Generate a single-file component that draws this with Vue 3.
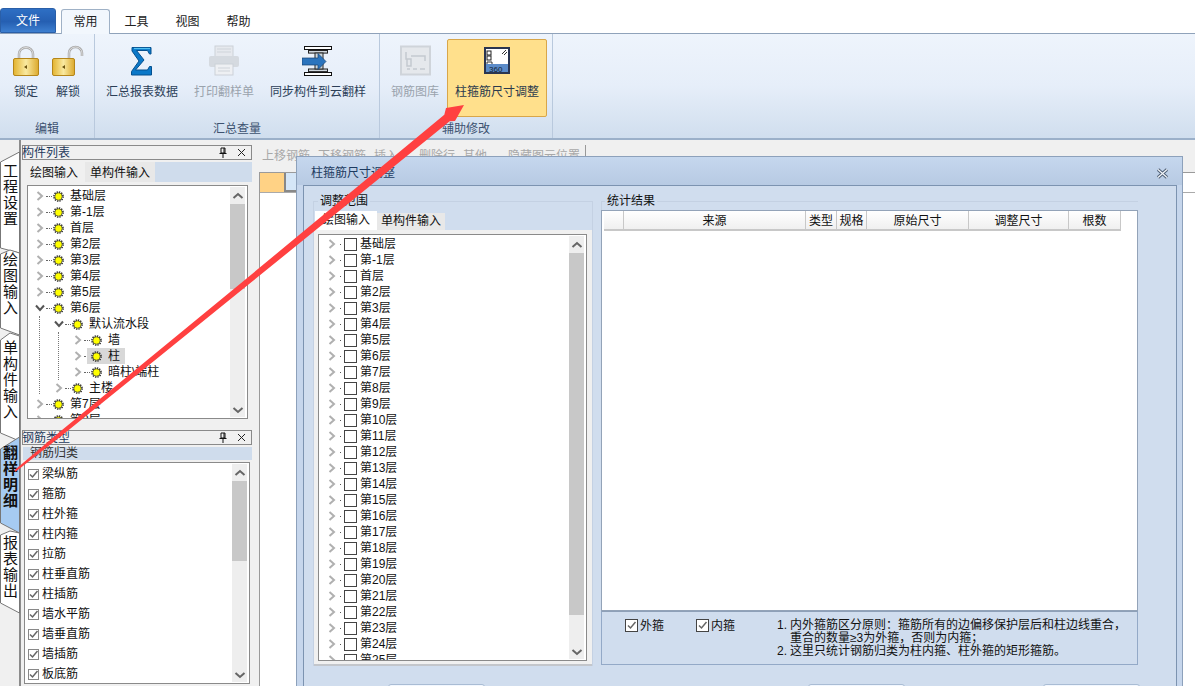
<template>
  <div class="app">
    <svg class="defs" width="0" height="0">
      <symbol id="gear" viewBox="0 0 12 12">
        <circle cx="6" cy="6" r="5" fill="none" stroke="#222" stroke-width="1.600" stroke-dasharray="1.500 1.100"/>
        <circle cx="6" cy="6" r="4" fill="#ffff00" stroke="#333" stroke-width="0.700"/>
      </symbol>
      <symbol id="chev" viewBox="0 0 8 10">
        <polyline points="1.500,1 6,5 1.500,9" fill="none" stroke="#b0b0b0" stroke-width="2"/>
      </symbol>
      <symbol id="chev-open" viewBox="0 0 10 8">
        <polyline points="1,1.500 5,6 9,1.500" fill="none" stroke="#555" stroke-width="2"/>
      </symbol>
      <symbol id="up" viewBox="0 0 12 8">
        <polyline points="1.500,6 6,2 10.500,6" fill="none" stroke="#666" stroke-width="2"/>
      </symbol>
      <symbol id="down" viewBox="0 0 12 8">
        <polyline points="1.500,2 6,6 10.500,2" fill="none" stroke="#666" stroke-width="2"/>
      </symbol>
      <symbol id="tick" viewBox="0 0 11 11">
        <polyline points="2,5.500 4.500,8 9.500,2" fill="none" stroke="#666" stroke-width="1.500"/>
      </symbol>
    </svg>

    <!-- ribbon -->
    <div class="tabs">
      <div class="file-tab">文件</div>
      <div class="rtab active">常用</div>
      <div class="rtab">工具</div>
      <div class="rtab">视图</div>
      <div class="rtab">帮助</div>
    </div>
    <div class="ribbon">
      <div class="group g1">
        <div class="btns">
          <div class="rbtn">
            <svg class="ico" width="32" height="32" viewBox="0 0 32 32">
              <defs>
                <linearGradient id="gold" x1="0" x2="1" y1="0" y2="0">
                  <stop offset="0" stop-color="#e3b32f"/><stop offset="0.5" stop-color="#f9e9a0"/><stop offset="1" stop-color="#dca92c"/>
                </linearGradient>
              </defs>
              <path d="M9 14V9a7 6.500 0 0 1 14 0v5" fill="none" stroke="#a8a8a8" stroke-width="2.500"/>
              <path d="M9 14V9a7 6.500 0 0 1 14 0v5" fill="none" stroke="#e8e8e8" stroke-width="0.800"/>
              <rect x="3.500" y="13.500" width="25" height="17" rx="1.500" fill="url(#gold)" stroke="#b5861a"/>
              <path d="M17 20l-3 2 3 2z" fill="#6b5310"/>
            </svg>
            <span>锁定</span>
          </div>
          <div class="rbtn">
            <svg class="ico" width="32" height="32" viewBox="0 0 32 32">
              <path d="M17 14V8a6.500 6 0 0 1 13 0v3" fill="none" stroke="#a8a8a8" stroke-width="2.500"/>
              <path d="M17 14V8a6.500 6 0 0 1 13 0v3" fill="none" stroke="#e8e8e8" stroke-width="0.800"/>
              <rect x="0.500" y="13.500" width="22" height="17" rx="1.500" fill="url(#gold)" stroke="#b5861a"/>
              <path d="M13 20l-3 2 3 2z" fill="#6b5310"/>
            </svg>
            <span>解锁</span>
          </div>
        </div>
        <div class="glabel">编辑</div>
      </div>
      <div class="group g2">
        <div class="btns">
          <div class="rbtn">
            <svg class="ico" width="32" height="32" viewBox="0 0 32 32">
              <path d="M6 2.500H25V9H23.500L21.500 5.500H10.500L18 15L9.500 25H21.500L23.500 21.500H25.500V30H5.500V26.500L13 16L6 6Z" fill="#0b78c8" stroke="#05508f"/>
              <path d="M8 3.500H24" stroke="#53c1f2" stroke-width="1.200"/>
            </svg>
            <span>汇总报表数据</span>
          </div>
          <div class="rbtn off">
            <svg class="ico" width="32" height="32" viewBox="0 0 32 32">
              <rect x="7" y="1" width="18" height="11" fill="#e6e9ee" stroke="#ccd1d8"/>
              <path d="M9 4h14M9 7h14" stroke="#cfd4da"/>
              <rect x="1" y="11" width="30" height="11" rx="2" fill="#d5dae0"/>
              <rect x="7" y="19" width="18" height="11" fill="#eef0f3" stroke="#ccd1d8"/>
              <path d="M10 23h12M10 26h12" stroke="#cfd4da"/>
            </svg>
            <span>打印翻样单</span>
          </div>
          <div class="rbtn">
            <svg class="ico" width="32" height="32" viewBox="0 0 32 32">
              <rect x="2.500" y="1.500" width="27" height="3" fill="#fff" stroke="#111"/>
              <rect x="6.500" y="5.500" width="19" height="2.600" fill="#cfd6dc" stroke="#222"/>
              <rect x="2.500" y="27.500" width="27" height="3" fill="#fff" stroke="#111"/>
              <rect x="6.500" y="24" width="19" height="2.600" fill="#cfd6dc" stroke="#222"/>
              <rect x="13" y="8" width="8" height="16" fill="#cdd6db" stroke="#222"/>
              <path d="M0 13h16V8.500l8 8-8 8V20H0z" fill="#2b74bd" stroke="#14406e" stroke-width="0.700"/>
            </svg>
            <span>同步构件到云翻样</span>
          </div>
        </div>
        <div class="glabel">汇总查量</div>
      </div>
      <div class="group g3">
        <div class="btns">
          <div class="rbtn off">
            <svg class="ico" width="32" height="32" viewBox="0 0 32 32">
              <rect x="2" y="1.500" width="29" height="28" fill="#e5e8ec" stroke="#cfd4da" stroke-width="2"/>
              <path d="M7 7v7h5v7h-4v-7M12 11h14v5M8 24h3M14 24h4M21 24h5" fill="none" stroke="#c4c9cf" stroke-width="1.500"/>
            </svg>
            <span>钢筋图库</span>
          </div>
          <div class="rbtn hot">
            <svg class="ico" width="32" height="32" viewBox="0 0 32 32">
              <rect x="4" y="3" width="24" height="25" fill="#fff" stroke="#2a3550" stroke-width="2"/>
              <rect x="5" y="19" width="22" height="8" fill="#5b8bc8"/>
              <rect x="6" y="6" width="4" height="4" fill="none" stroke="#222"/>
              <rect x="6" y="11" width="4" height="4" fill="none" stroke="#222"/>
              <path d="M6 19v-2h5v2M21 9l4-4M23 10l3-3" fill="none" stroke="#333"/>
              <text x="8" y="26.500" class="ico-num">360</text>
            </svg>
            <span>柱箍筋尺寸调整</span>
          </div>
        </div>
        <div class="glabel">辅助修改</div>
      </div>
    </div>

    <!-- workspace -->
    <div class="work">
      <div class="side">
        <div
          v-for="t in sideTabs"
          :key="t.text"
          class="stab"
          :class="{ on: t.on }"
          :style="{ height: t.h + 'px', paddingTop: t.pad + 'px' }"
        >
          <svg class="stab-bg" width="20" :height="t.h" :viewBox="`0 0 20 ${t.h}`">
            <polygon :points="t.shape" :fill="t.on ? '#a6cbf2' : '#fff'" stroke="#777"/>
          </svg>
          <span>{{ t.text }}</span>
        </div>
      </div>

      <div class="left">
        <div class="ptitle">
          <span>构件列表</span>
          <svg width="10" height="11" viewBox="0 0 10 11"><path d="M3 1h4v5H3zM1.500 6.500h7M5 7v4M6 1v5" fill="none" stroke="#111"/></svg>
          <svg width="9" height="9" viewBox="0 0 9 9"><path d="M1 1l7 7M8 1L1 8" stroke="#222"/></svg>
        </div>
        <div class="ptabs">
          <div class="ptab on">绘图输入</div>
          <div class="ptab">单构件输入</div>
        </div>
        <div class="treebox t1">
          <div class="rows">
            <i class="vline a"></i><i class="vline b"></i>
            <div v-for="r in floors" :key="r.name" class="row" :style="{ paddingLeft: 8 + r.lv * 19 + 'px' }">
              <svg v-if="r.open" class="exp" width="10" height="8"><use href="#chev-open"/></svg>
              <svg v-else class="exp" width="8" height="10"><use href="#chev"/></svg>
              <i class="dots"></i>
              <div class="node" :class="{ sel: r.sel }">
                <svg width="11" height="11"><use href="#gear"/></svg>
                <span>{{ r.name }}</span>
              </div>
            </div>
          </div>
          <div class="sb">
            <svg width="12" height="8"><use href="#up"/></svg>
            <i class="thumb th1"></i>
            <svg class="dn" width="12" height="8"><use href="#down"/></svg>
          </div>
        </div>

        <div class="ptitle second">
          <span>钢筋类型</span>
          <svg width="10" height="11" viewBox="0 0 10 11"><path d="M3 1h4v5H3zM1.500 6.500h7M5 7v4M6 1v5" fill="none" stroke="#111"/></svg>
          <svg width="9" height="9" viewBox="0 0 9 9"><path d="M1 1l7 7M8 1L1 8" stroke="#222"/></svg>
        </div>
        <div class="kind-bar">钢筋归类</div>
        <div class="treebox t2">
          <div class="rows">
            <div v-for="k in kinds" :key="k" class="kind">
              <span class="cb small"><svg width="11" height="11"><use href="#tick"/></svg></span>
              <span>{{ k }}</span>
            </div>
          </div>
          <div class="sb">
            <svg width="12" height="8"><use href="#up"/></svg>
            <i class="thumb th2"></i>
            <svg class="dn" width="12" height="8"><use href="#down"/></svg>
          </div>
        </div>
      </div>

      <div class="main">
        <div class="tools">
          <span>上移钢筋</span><span>下移钢筋</span><span>插入</span><span class="far">删除行</span><span>其他</span><span class="far">隐藏图元位置</span>
        </div>
        <div class="sheet">
          <div class="sheet-head"><i class="corner"></i><i class="headcell"></i></div>
        </div>
      </div>
    </div>

    <!-- dialog window -->
    <div class="dlg">
      <div class="dlg-title">
        <span>柱箍筋尺寸调整</span>
        <svg width="13" height="11" viewBox="0 0 13 11">
          <path d="M2 1.500l9 8M11 1.500l-9 8" stroke="#4f5f75" stroke-width="3.200"/>
          <path d="M2 1.500l9 8M11 1.500l-9 8" stroke="#f4f7fb" stroke-width="1.200"/>
        </svg>
      </div>
      <div class="dlg-body">
        <div class="dlg-cols">
          <fieldset class="range">
            <legend>调整范围</legend>
            <div class="dtabs">
              <div class="dtab on">绘图输入</div>
              <div class="dtab">单构件输入</div>
            </div>
            <div class="dwrap">
              <div class="treebox t3">
                <div class="rows">
                  <div v-for="f in dialogFloors" :key="f" class="drow">
                    <svg class="exp" width="8" height="10"><use href="#chev"/></svg>
                    <i class="dot"></i>
                    <span class="cb"></span>
                    <span>{{ f }}</span>
                  </div>
                </div>
                <div class="sb">
                  <svg width="12" height="8"><use href="#up"/></svg>
                  <i class="thumb th3"></i>
                  <svg class="dn" width="12" height="8"><use href="#down"/></svg>
                </div>
              </div>
            </div>
          </fieldset>

          <fieldset class="result">
            <legend>统计结果</legend>
            <div class="table">
              <div class="thead">
                <div v-for="c in columns" :key="c.name + c.w" class="th" :style="{ width: c.w + 'px' }">{{ c.name }}</div>
              </div>
            </div>
            <div class="legendbox">
              <label class="opt first"><span class="cb"><svg width="11" height="11"><use href="#tick"/></svg></span>外箍</label>
              <label class="opt second-opt"><span class="cb"><svg width="11" height="11"><use href="#tick"/></svg></span>内箍</label>
              <div class="notes">
                <div><b>1.</b>内外箍筋区分原则：箍筋所有的边偏移保护层后和柱边线重合，</div>
                <div class="cont">重合的数量≥3为外箍，否则为内箍；</div>
                <div><b>2.</b>这里只统计钢筋归类为柱内箍、柱外箍的矩形箍筋。</div>
              </div>
            </div>
          </fieldset>
        </div>
        <div class="dlg-foot">
          <div class="dbtn"></div>
          <div class="dbtn b2"></div>
          <div class="dbtn b3"></div>
        </div>
      </div>
    </div>

    <!-- annotation arrow -->
    <svg class="arrow" width="1195" height="686" viewBox="0 0 1195 686">
      <polygon
        points="14.400,470.200 58.700,432.700 248.100,277.200 444.300,114.700 446,108 464,105 455,121 449.700,121.300 251.900,281.800 61.300,435.900 15.600,471.800"
        fill="#ff4040"
      />
    </svg>
  </div>
</template>

<script setup>
const sideTabs = [
  { text: "工程设置", h: 100, pad: 13, shape: "0.500,12 19.500,2 19.500,103 0.500,98" },
  { text: "绘图输入", h: 82, pad: 2, shape: "0.500,4 10,0 19.500,3 19.500,85 0.500,78" },
  { text: "单构件输入", h: 100, pad: 8, shape: "0.500,8 10,1 19.500,4 19.500,109 0.500,101" },
  { text: "翻样明细", h: 100, pad: 13, on: true, shape: "0.500,17 19.500,5 19.500,101 0.500,91" },
  { text: "报表输出", h: 85, pad: 3, shape: "0.500,3 10,-1 19.500,1 19.500,81 0.500,71" },
];

const floors = [
  { name: "基础层", lv: 0 },
  { name: "第-1层", lv: 0 },
  { name: "首层", lv: 0 },
  { name: "第2层", lv: 0 },
  { name: "第3层", lv: 0 },
  { name: "第4层", lv: 0 },
  { name: "第5层", lv: 0 },
  { name: "第6层", lv: 0, open: true },
  { name: "默认流水段", lv: 1, open: true },
  { name: "墙", lv: 2 },
  { name: "柱", lv: 2, sel: true },
  { name: "暗柱\\端柱", lv: 2 },
  { name: "主楼", lv: 1 },
  { name: "第7层", lv: 0 },
  { name: "第8层", lv: 0 },
];

const kinds = ["梁纵筋", "箍筋", "柱外箍", "柱内箍", "拉筋", "柱垂直筋", "柱插筋", "墙水平筋", "墙垂直筋", "墙插筋", "板底筋"];

const dialogFloors = ["基础层", "第-1层", "首层"];
for (let i = 2; i <= 25; i++) dialogFloors.push(`第${i}层`);

const columns = [
  { name: "", w: 20 },
  { name: "来源", w: 182 },
  { name: "类型", w: 31 },
  { name: "规格", w: 30 },
  { name: "原始尺寸", w: 102 },
  { name: "调整尺寸", w: 100 },
  { name: "根数", w: 52 },
];
</script>

<style>
html, body { margin: 0; background: #f0f0f0; }
</style>

<style scoped>
* { box-sizing: border-box; }
.app {
  position: relative;
  width: 1195px;
  height: 686px;
  overflow: hidden;
  display: flex;
  flex-direction: column;
  background: #f0f0f0;
  color: #111;
  font: 12px/16px "Liberation Sans", "Noto Sans CJK SC", sans-serif;
}
.defs { position: absolute; }
i { display: block; }

.tabs {
  height: 34px;
  flex: none;
  display: flex;
  align-items: flex-end;
  background: #fff;
  border-bottom: 1px solid #8fa2ba;
}
.file-tab {
  width: 56px;
  height: 25px;
  margin-right: 5px;
  border: 1px solid #2a5fa8;
  border-radius: 3px 3px 0 0;
  background: linear-gradient(#2e6fc4, #255fb2 55%, #3d7fd0);
  color: #fff;
  text-align: center;
  line-height: 24px;
}
.rtab {
  width: 51px;
  height: 24px;
  margin-bottom: -1px;
  text-align: center;
  line-height: 24px;
  color: #222;
}
.rtab.active {
  width: 49px;
  margin-right: 1px;
  height: 25px;
  border: 1px solid #9fb1c6;
  border-bottom: 0;
  border-radius: 3px 3px 0 0;
  background: #f2f7fd;
}

.ribbon {
  height: 106px;
  flex: none;
  display: flex;
  background: linear-gradient(#eef4fc, #e6eef9 50%, #d0deee);
  border-bottom: 2px solid #9bb0c9;
}
.group {
  display: flex;
  flex-direction: column;
  border-right: 1px solid #b9c9dd;
}
.g1 { width: 95px; padding-left: 6px; }
.g2 { width: 285px; padding-left: 3px; }
.g3 { width: 173px; padding-left: 3px; }
.btns { display: flex; flex: none; height: 78px; margin-top: 5px; }
.g1 .btns { gap: 2px; }
.g1 .rbtn { width: 40px; padding-left: 0; padding-right: 0; }
.glabel {
  text-align: center;
  margin-top: 4px;
  margin-left: -3px;
  color: #3d5270;
}
.g1 .glabel { margin-left: -6px; }
.rbtn {
  display: flex;
  flex-direction: column;
  align-items: center;
  padding: 6px 8px 0;
  color: #2c3f58;
}
.rbtn span { margin-top: 7px; }
.ico { flex: none; }
.rbtn.off { color: #9aa3ad; }
.rbtn.hot {
  background: #ffe08c;
  border: 1px solid #d8a64a;
  border-radius: 2px;
  padding: 5px 7px 0;
  color: #2b3a4c;
}
.ico-num { font: 8px "Liberation Sans", sans-serif; fill: #123; }

.work {
  flex: 1;
  min-height: 0;
  display: flex;
  padding-top: 5px;
}
.side {
  width: 21px;
  flex: none;
  border-right: 2px solid #8c8c8c;
  margin-top: -5px;
  padding-top: 10px;
}
.stab {
  position: relative;
  display: flex;
  flex-direction: column;
  align-items: center;
  width: 19px;
}
.stab-bg { position: absolute; left: 0; top: 0; overflow: visible; }
.stab span {
  position: relative;
  writing-mode: vertical-rl;
  font-size: 15px;
  line-height: 17px;
  letter-spacing: 1px;
}
.stab.on span { font-weight: 700; font-size: 15px; letter-spacing: 1px; }

.left {
  width: 231px;
  flex: none;
  padding-left: 1px;
}
.ptitle {
  height: 15px;
  display: flex;
  align-items: center;
  border: 1px solid #8a8a8a;
  background: #f0f0f0;
  padding-right: 5px;
  gap: 9px;
  color: #1f3a5c;
}
.ptitle span { flex: 1; margin-left: -1px; }
.ptitle.second { margin-top: 11px; }
.ptabs {
  display: flex;
  height: 20px;
  margin: 2px 0 0 1px;
  background: #cfdcec;
}
.ptab {
  height: 20px;
  padding: 1px 5px 0;
  line-height: 20px;
  background: #e8e8e8;
}
.ptab.on { background: #f0f0f0; padding: 1px 7px 0; }
.treebox {
  display: flex;
  border: 1px solid #8a8a8a;
  background: #fff;
  overflow: hidden;
}
.t1 { height: 234px; margin: 3px 4px 0 5px; }
.t2 { height: 222px; margin: 2px 2px 0 2px; }
.rows { position: relative; flex: 1; min-width: 0; padding-top: 2px; }
.t2 .rows { padding-top: 1px; }
.row { display: flex; align-items: center; height: 16px; }
.exp { flex: none; width: 8px; }
svg.exp[height="8"] { width: 10px; margin-left: -1px; margin-right: -1px; }
.dots {
  width: 6px;
  margin: 0 1px 0 2px;
  border-top: 1px dotted #666;
}
.node {
  display: flex;
  align-items: center;
  height: 16px;
  margin-left: -4px;
  padding: 0 5px 0 4px;
  gap: 6px;
}
.node.sel { background: #d8d8d8; }
.node svg { flex: none; }
.vline { position: absolute; width: 0; border-left: 1px dotted #777; }
.vline.a { left: 11px; top: 130px; height: 78px; }
.vline.b { left: 30px; top: 146px; height: 48px; }
.sb {
  width: 15px;
  flex: none;
  margin: 1px 2px 1px 0;
  display: flex;
  flex-direction: column;
  align-items: center;
  background: #eeeeee;
  padding-top: 5px;
}
.thumb { width: 100%; background: #c8c8c8; margin-top: 4px; }
.th1 { height: 85px; }
.th2 { height: 80px; }
.th3 { height: 362px; }
.dn { margin-top: auto; margin-bottom: 3px; }

.kind-bar {
  height: 13px;
  margin: 2px 0 0 1px;
  padding-left: 7px;
  line-height: 13px;
  background: #cfdcec;
  color: #333;
}
.kind { display: flex; align-items: center; height: 20px; gap: 3px; padding-left: 3px; }
.cb {
  display: flex;
  flex: none;
  width: 13px;
  height: 13px;
  align-items: center;
  justify-content: center;
  border: 1px solid #444;
  background: #fff;
}
.cb.small { width: 11px; height: 11px; border-color: #888; }
.cb.small svg { flex: none; }

.main { flex: 1; min-width: 0; padding-left: 6px; }
.tools {
  width: 328px;
  height: 21px;
  display: flex;
  gap: 8px;
  padding-left: 4px;
  align-items: center;
  border-right: 1px solid #999;
  color: #a8a8a8;
}
.tools .far { margin-left: 13px; }
.sheet {
  height: 520px;
  margin-top: 6px;
  margin-left: 1px;
  border: 1px solid #9a9a9a;
  border-right: 0;
  background: #fff;
}
.sheet-head { display: flex; height: 20px; border-bottom: 1px solid #aaa; }
.corner { width: 24px; background: #ffd285; }
.headcell { width: 60px; background: #d5e6f7; border-left: 2px solid #888; border-bottom: 2px solid #888; }

.dlg {
  position: absolute;
  left: 296px;
  top: 156px;
  width: 887px;
  height: 530px;
  border: 1px solid #8da1bb;
  border-bottom: 0;
  background: #c6d6ec;
  display: flex;
  flex-direction: column;
}
.dlg-title {
  height: 28px;
  flex: none;
  display: flex;
  align-items: center;
  justify-content: space-between;
  padding: 4px 13px 0 14px;
  background: linear-gradient(#c5d7ee, #b7cae3);
  color: #1d3b60;
}
.dlg-body {
  flex: 1;
  margin: 0 5px 0 6px;
  padding: 9px 0 0 9px;
  background: #d0ddee;
  border: 1px solid #7c93b0;
  border-bottom: 0;
}
.dlg-cols { display: flex; gap: 8px; }
fieldset {
  margin: 0;
  min-width: 0;
  border: 1px solid #c4d1e3;
}
legend { padding: 0 2px; line-height: 12px; margin-left: 3px; color: #111; }
.range { width: 280px; height: 471px; padding: 4px 0 0 1px; }
.result { width: 537px; height: 470px; padding: 3px 0 0 0; border-right-width: 0; border-bottom: 0; }
.dtabs { display: flex; height: 19px; align-items: flex-end; }
.dtab {
  height: 17px;
  width: 68px;
  line-height: 17px;
  text-align: center;
  background: #e8e8e8;
}
.dtab.on { width: 62px; height: 19px; line-height: 19px; background: #fff; }
.dwrap {
  height: 436px;
  width: 278px;
  margin-left: -1px;
  padding: 4px 5px 0 4px;
  background: #f0f0f0;
  border-bottom: 2px solid #c3c6cb;
}
.t3 { height: 427px; }
.t3 .rows { padding-top: 1px; }
.drow { display: flex; align-items: center; height: 16px; padding-left: 9px; }
.dot { width: 1px; height: 1px; background: #555; margin: 0 3px 0 4px; }
.drow .cb { margin-right: 3px; }

.table {
  height: 401px;
  margin-left: -1px;
  border: 1px solid #93a3b8;
  background: #fff;
  padding: 0 0 0 2px;
}
.thead { display: flex; height: 20px; border-bottom: 2px solid #c8c8c8; width: 517px; }
.th {
  flex: none;
  text-align: center;
  line-height: 20px;
  border-right: 1px solid #c8c8c8;
  background: linear-gradient(#fff, #f0f0f0);
}
.legendbox {
  position: relative;
  display: flex;
  height: 54px;
  margin-left: -1px;
  border: 1px solid #93a9c7;
  border-top-color: #8ea0b8;
  padding: 7px 0 0 23px;
}
.opt { display: flex; align-items: flex-start; gap: 2px; line-height: 14px; height: 14px; }
.second-opt { margin-left: 32px; }
.notes { margin-left: 42px; line-height: 13px; }
.notes b { display: inline-block; width: 13px; font-weight: 400; }
.cont { padding-left: 13px; }
.dlg-foot { display: flex; margin: 18px 0 0 75px; }
.dbtn {
  width: 97px;
  height: 24px;
  flex: none;
  border: 1px solid #a9bcd4;
  border-radius: 3px 3px 0 0;
  background: linear-gradient(#f2f7fe, #dde8f6);
}
.b2 { margin-left: 323px; }
.b3 { margin-left: 138px; }

.arrow { position: absolute; left: 0; top: 0; pointer-events: none; }
</style>
